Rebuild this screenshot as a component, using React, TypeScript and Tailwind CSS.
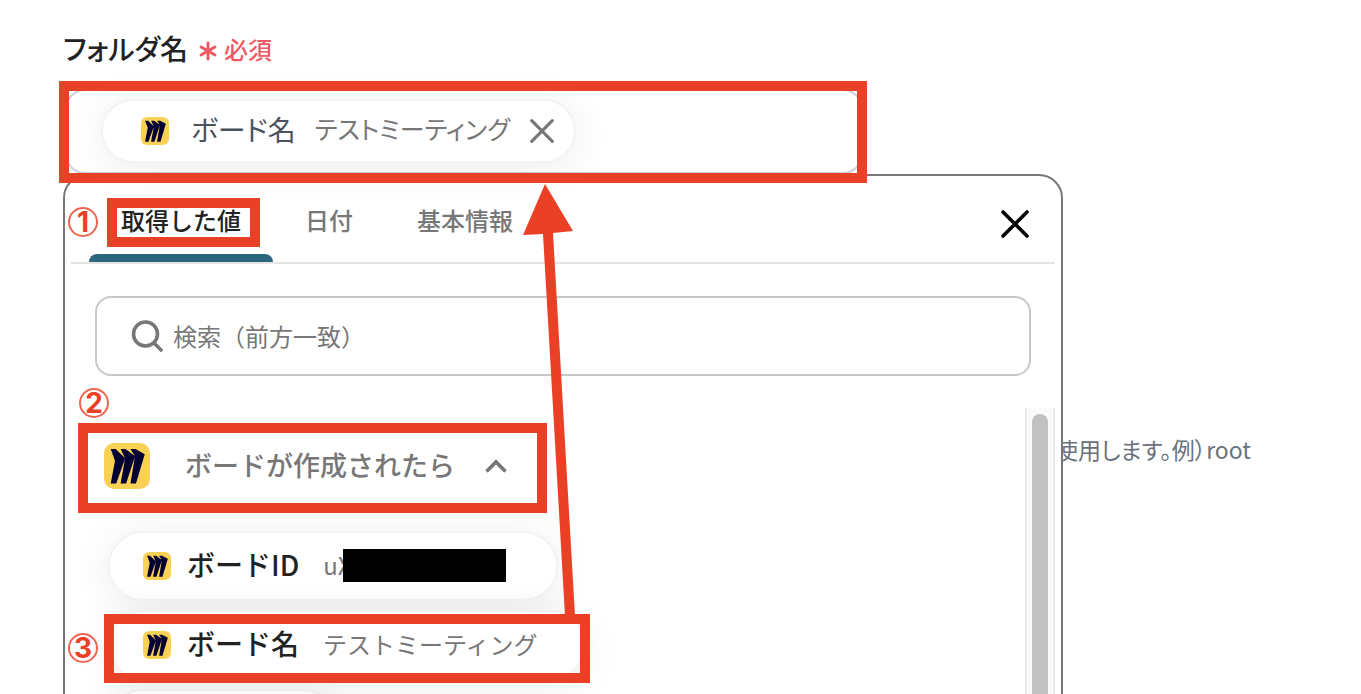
import type { ReactNode } from 'react';
import { Asterisk } from 'lucide-react';

const tabs = ['取得した値', '日付', '基本情報'];

const BoardLogo = ({ className }: { className: string }) => (
  <svg viewBox="0 0 46 46" className={`shrink-0 ${className}`} aria-hidden="true">
    <rect width="46" height="46" rx="10" fill="#f8d155" />
    <path
      transform="translate(6.7 6) scale(1.42 1.44)"
      fill="#050033"
      d="M17.392 0H13.9L17 4.808 10.444 0H6.949l3.102 6.3L3.494 0H0l3.05 8.131L0 24h3.9L10.05 6.985 6.949 24h3.9L17 5.494 13.899 24h3.9L24 3.672 17.392 0z"
    />
  </svg>
);

const CrossIcon = ({ className }: { className: string }) => (
  <svg viewBox="0 0 28 28" className={className} fill="none" stroke="currentColor" strokeLinecap="round" aria-hidden="true">
    <path d="M2 2l24 24M26 2L2 26" strokeWidth="3.6" />
  </svg>
);

// red frame laid over the part that a step talks about
const Frame = ({ className }: { className: string }) => (
  <span className={`pointer-events-none absolute z-20 border-[10px] border-[#ea4025] ${className}`} />
);

const Step = ({ className, children }: { className: string; children: ReactNode }) => (
  <span
    className={`absolute z-20 flex size-[30px] items-center justify-center rounded-full border-2 border-[#ea4025]/80 font-['Inter',sans-serif] text-[28px] leading-none font-bold text-[#ea4025] ${className}`}
  >
    {children}
  </span>
);

const ValuePill = ({ className = '', children }: { className?: string; children?: ReactNode }) => (
  <button
    className={`flex h-[70px] shrink-0 items-center rounded-full border-2 border-[#f3f3f3] bg-white pl-[33px] shadow-[0_4px_40px_rgba(0,0,0,0.08)] ${className}`}
  >
    {children}
  </button>
);

const PillText = ({ name, children }: { name: string; children: ReactNode }) => (
  <>
    <BoardLogo className="size-7" />
    <span className="ml-4 pb-1 text-[28px] font-medium text-[#222]">{name}</span>
    <span className="ml-6 flex items-center pb-0.5 text-2xl text-[#777]">{children}</span>
  </>
);

export default function App() {
  return (
    <main className="relative h-screen overflow-hidden bg-white pl-[63px] font-['Noto_Sans_CJK_JP','Noto_Sans',sans-serif] text-[#222]">
      <div className="flex h-[89px] items-center pt-2 font-medium">
        <span className="pb-0.5 text-[28px] [font-feature-settings:'palt']">フォルダ名</span>
        <Asterisk className="mt-1 ml-1 size-8 text-[#ee5a62]" strokeWidth={2.2} />
        <span className="text-2xl text-[#ee5a62]">必須</span>
      </div>

      <div className="relative z-10 ml-0.5 flex h-[85px] max-w-[798px] items-center rounded-[20px] border-2 border-[#ccd2da] pb-0.5 pl-[34px]">
        <div className="flex h-16 items-center rounded-full border-2 border-[#f3f3f3] bg-white pr-5 pl-[38px] shadow-[0_4px_40px_rgba(0,0,0,0.08)]">
          <BoardLogo className="size-7" />
          <span className="ml-[22px] pb-1 text-[28px] text-[#4b525c] [font-feature-settings:'palt']">ボード名</span>
          <span className="ml-[19px] pb-1 text-[25px] text-[#777] [font-feature-settings:'palt']">テストミーティング</span>
          <button className="ml-5 text-[#777]" aria-label="削除">
            <CrossIcon className="size-6" />
          </button>
        </div>
        <Frame className="-top-[10px] -right-[6px] -bottom-[11px] -left-2" />
      </div>

      <div className="flex items-start">
        <section className="relative h-[560px] w-[1000px] shrink-0 rounded-3xl border-2 border-[#777] bg-white">
          <div className="mx-1.5 flex h-[88px] items-stretch border-b-2 border-[#e5e5e5] pl-[18px]">
            <div role="tablist" className="flex text-2xl font-medium">
              {tabs.map((tab, i) => (
                <button
                  key={tab}
                  role="tab"
                  aria-selected={i === 0}
                  className={`relative px-8 pt-0.5 ${i === 0 ? 'text-[#222]' : 'text-[#777]'}`}
                >
                  {tab}
                  {i === 0 && (
                    <>
                      <span className="absolute inset-x-0 bottom-0 h-2 rounded-t-lg bg-[#2d677e]" />
                      <Frame className="top-[22px] right-[13px] bottom-[15px] left-[18px]" />
                    </>
                  )}
                </button>
              ))}
            </div>
            <button className="mr-[26px] ml-auto pt-2.5 text-black" aria-label="閉じる">
              <CrossIcon className="size-7" />
            </button>
            <Step className="top-[31px] left-[3px]">1</Step>
          </div>

          <label className="mx-[30px] mt-8 flex h-20 items-center gap-2.5 rounded-2xl border-2 border-[#c8c8c8] pl-[34px]">
            <svg viewBox="0 0 32 32" className="size-8" fill="none" stroke="#777" strokeWidth="3.6" strokeLinecap="round" aria-hidden="true">
              <circle cx="14.5" cy="14" r="12" />
              <path d="M23 23l7 7" />
            </svg>
            <input
              type="text"
              aria-label="検索"
              placeholder="検索（前方一致）"
              className="min-w-0 flex-1 text-2xl outline-none placeholder:text-[#777]"
            />
          </label>

          <div className="mt-8 mr-1.5 flex h-[326px] justify-between">
            <div className="flex flex-col items-start gap-[9px] pl-[43px]">
              <button className="relative -ml-1 flex h-[114px] shrink-0 items-center pt-0.5">
                <BoardLogo className="size-[46px]" />
                <span className="ml-[35px] pb-0.5 text-[27px] font-medium text-[#777]">ボードが作成されたら</span>
                <svg viewBox="0 0 22 14" className="ml-[30px] h-[14px] w-[22px]" fill="none" stroke="#777" strokeWidth="3.8" aria-hidden="true">
                  <path d="M1.5 12.5L11 3l9.500 9.500" />
                </svg>
                <Frame className="top-[15px] -right-10 bottom-[9px] -left-[26px]" />
                <Step className="-top-5 -left-[25px]">2</Step>
              </button>
              <ValuePill className="pr-[50px]">
                <PillText name="ボードID">
                  uX
                  <span className="-ml-[9px] h-[33px] w-[163px] bg-black" />
                </PillText>
              </ValuePill>
              <div className="relative shrink-0">
                <ValuePill className="pr-[46px]">
                  <PillText name="ボード名">テストミーティング</PillText>
                </ValuePill>
                <Frame className="top-[4px] -right-1 -bottom-[3px] -left-1" />
                <Step className="top-[23px] -left-10">3</Step>
              </div>
              <ValuePill className="w-[230px]" />
            </div>
            <div className="w-[30px] border-x-2 border-[#e9e9e9] bg-[#fafafa] px-[5px] pt-1.5">
              <div className="h-full rounded-t-full bg-[#c1c1c1]" />
            </div>
          </div>
        </section>
        <p className="mt-[258px] -ml-[8px] text-[23px] whitespace-nowrap text-[#69717d] [font-feature-settings:'palt']">
          使用します。例）root
        </p>
      </div>

      {/* arrow from the picked value up to the field */}
      <svg viewBox="0 0 54 432" className="absolute top-[184px] left-[523px] z-20 h-[432px] w-[54px]" fill="#ea4025" aria-hidden="true">
        <path d="M22 0L50 47 30 49 52 432H42L20 50 0 51z" />
      </svg>
    </main>
  );
}
